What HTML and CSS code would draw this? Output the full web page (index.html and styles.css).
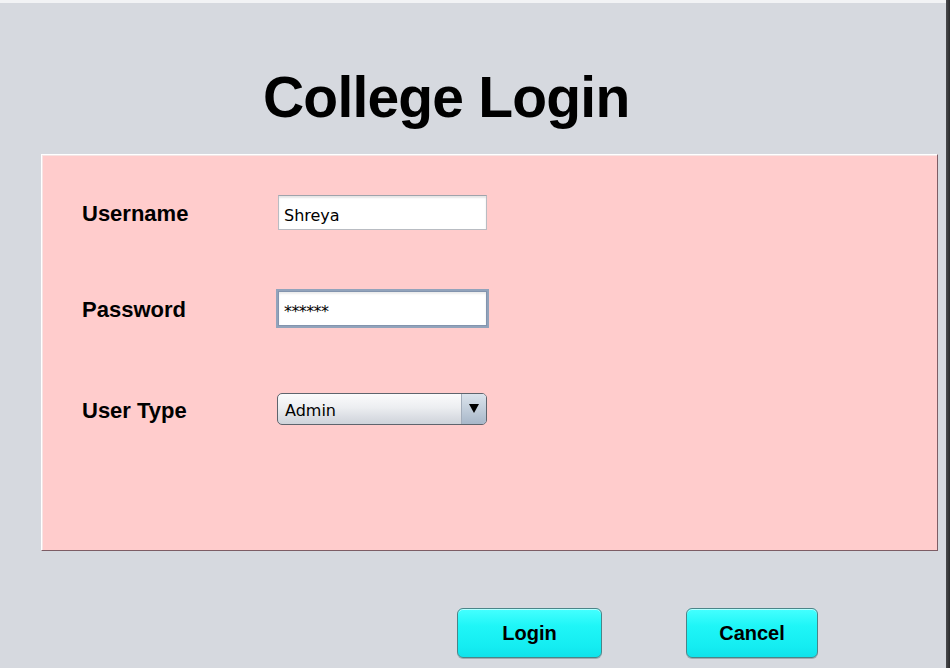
FILE: index.html
```html
<!DOCTYPE html>
<html>
<head>
<meta charset="utf-8">
<title>College Login</title>
<link rel="stylesheet" href="styles.css">
</head>
<body>
<div class="window">
  <div class="main">
    <div class="topline"></div>
    <h1 class="title">College Login</h1>
    <div class="panel">
      <div class="row row1">
        <div class="label">Username</div>
        <div class="field"><span class="value">Shreya</span></div>
      </div>
      <div class="row row2">
        <div class="label">Password</div>
        <div class="field focus"><span class="value stars">******</span></div>
      </div>
      <div class="row row3">
        <div class="label">User Type</div>
        <div class="combo">
          <span class="combo-text">Admin</span>
          <span class="combo-btn"><span class="arrow"></span></span>
        </div>
      </div>
    </div>
    <div class="buttons">
      <button class="btn btn-login">Login</button>
      <button class="btn btn-cancel">Cancel</button>
    </div>
  </div>
  <div class="edge"></div>
</div>
</body>
</html>
```
FILE: styles.css
```css
html, body {
  margin: 0;
  padding: 0;
}
body {
  width: 950px;
  height: 668px;
  overflow: hidden;
  background: #d6d9df;
}
.window {
  display: flex;
  width: 950px;
  height: 668px;
}
.main {
  width: 946px;
  height: 668px;
  background: #d6d9df;
  display: flex;
  flex-direction: column;
}
.topline {
  height: 3px;
  background: #f2f3f5;
}
.edge {
  width: 4px;
  height: 668px;
  background: linear-gradient(90deg, #4a4b4e, #2a2a2c);
}
.title {
  margin: 66px 0 0 263px;
  font-family: "Liberation Sans", Arial, sans-serif;
  font-weight: bold;
  font-size: 57px;
  line-height: 57px;
  letter-spacing: -0.8px;
  color: #000;
  height: 57px;
}
.panel {
  margin: 28px 0 0 41px;
  width: 897px;
  height: 397px;
  box-sizing: border-box;
  background: #ffcccc;
  border-top: 1px solid #ffffff;
  border-left: 1px solid #ffffff;
  border-right: 1px solid #7d5d65;
  border-bottom: 1px solid #7d5d65;
  box-shadow: inset 1px 1px 0 #f7e4e4;
  padding: 37px 0 0 40px;
  display: flex;
  flex-direction: column;
}
.row {
  display: flex;
  align-items: center;
  height: 40px;
}
.row2 { margin-top: 56px; }
.row3 { margin-top: 61px; }
.label {
  width: 196px;
  padding-top: 3px;
  font-family: "Liberation Sans", Arial, sans-serif;
  font-weight: bold;
  font-size: 22px;
  color: #000;
}
.field {
  width: 209px;
  height: 35px;
  box-sizing: border-box;
  background: #ffffff;
  border: 1px solid #b9bcc2;
  border-top-color: #9fa3ab;
  box-shadow: inset 0 2px 2px rgba(0, 0, 0, 0.10);
  padding: 6px 0 0 5px;
}
.field.focus {
  border-color: #8394ae;
  box-shadow: 0 0 0 2px #92a3bb, inset 0 2px 2px rgba(0, 0, 0, 0.08);
}
.value {
  display: block;
  font-family: "DejaVu Sans", sans-serif;
  font-size: 16px;
  line-height: 27px;
  color: #000;
}
.stars {
  letter-spacing: -0.6px;
}
.combo {
  width: 210px;
  height: 32px;
  box-sizing: border-box;
  margin-left: -1px;
  border: 1px solid #5e646d;
  border-radius: 5px;
  background: linear-gradient(#fbfbfc, #eceef1 45%, #d9dce2 80%, #cfd3da);
  display: flex;
  overflow: hidden;
}
.combo-text {
  flex: 1;
  padding: 4px 0 0 7px;
  font-family: "DejaVu Sans", sans-serif;
  font-size: 16px;
  line-height: 26px;
  color: #000;
}
.combo-btn {
  width: 24px;
  border-left: 1px solid #a3adba;
  background: linear-gradient(#dbe3ec, #c2cedb 50%, #a8b7c9);
  display: flex;
  align-items: center;
  justify-content: center;
}
.arrow {
  width: 0;
  height: 0;
  border-left: 5px solid transparent;
  border-right: 5px solid transparent;
  border-top: 9px solid #000;
  margin-top: -2px;
}
.buttons {
  display: flex;
  margin: 57px 0 0 457px;
  gap: 84px;
}
.btn {
  height: 50px;
  box-sizing: border-box;
  border: 1px solid #4a8588;
  border-radius: 6px;
  background: linear-gradient(#45ffff, #1ff6f7 35%, #14ecf1 80%, #10e2ea);
  box-shadow: inset 0 1px 0 rgba(255, 255, 255, 0.6), 0 1px 0 rgba(60, 90, 95, 0.35);
  font-family: "Liberation Sans", Arial, sans-serif;
  font-weight: bold;
  font-size: 20px;
  color: #000;
  padding: 0;
}
.btn-login { width: 145px; }
.btn-cancel { width: 132px; }
```
